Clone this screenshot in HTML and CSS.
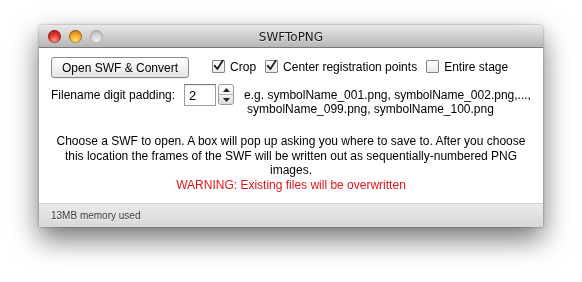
FILE: index.html
```html
<!DOCTYPE html>
<html>
<head>
<meta charset="utf-8">
<title>SWFToPNG</title>
<link rel="stylesheet" href="styles.css">
</head>
<body>
<div class="stage">
  <div class="window">
    <div class="titlebar">
      <div class="lights">
        <span class="light red"></span>
        <span class="light yellow"></span>
        <span class="light gray"></span>
      </div>
      <div class="title">SWFToPNG</div>
      <div></div>
    </div>
    <div class="content">
      <div class="row1">
        <button class="btn">Open SWF &amp; Convert</button>
        <div class="checks">
          <label class="check"><span class="box"><svg width="14" height="14" viewBox="0 0 14 14"><path d="M2.6 6.6 L5.4 10 L10.8 1.6" fill="none" stroke="#1e1e1e" stroke-width="1.8" stroke-linecap="round" stroke-linejoin="round"/></svg></span>Crop</label>
          <label class="check"><span class="box"><svg width="14" height="14" viewBox="0 0 14 14"><path d="M2.6 6.6 L5.4 10 L10.8 1.6" fill="none" stroke="#1e1e1e" stroke-width="1.8" stroke-linecap="round" stroke-linejoin="round"/></svg></span>Center registration points</label>
          <label class="check"><span class="box"></span>Entire stage</label>
        </div>
      </div>
      <div class="row2">
        <span class="padlabel">Filename digit padding:</span>
        <div class="stepper">
          <div class="field">2</div>
          <div class="arrows">
            <span class="arrow"><svg width="7" height="4" viewBox="0 0 7 4"><path d="M3.5 0 L7 4 L0 4 Z" fill="#222"/></svg></span>
            <span class="arrow lower"><svg width="7" height="4" viewBox="0 0 7 4"><path d="M0 0 L7 0 L3.5 4 Z" fill="#222"/></svg></span>
          </div>
        </div>
        <div class="example">
          <div>e.g. symbolName_001.png, symbolName_002.png,...,</div>
          <div class="l2">symbolName_099.png, symbolName_100.png</div>
        </div>
      </div>
      <p class="info">Choose a SWF to open. A box will pop up asking you where to save to. After you choose this location the frames of the SWF will be written out as sequentially-numbered PNG images.</p>
      <p class="warn">WARNING: Existing files will be overwritten</p>
    </div>
    <div class="status">13MB memory used</div>
  </div>
</div>
</body>
</html>
```

FILE: styles.css
```css
* { box-sizing: border-box; }
html, body { margin: 0; padding: 0; background: #fff; }
body { font-family: "Liberation Sans", Arial, sans-serif; font-size: 12px; color: #000; min-height: 282px; }

.stage { padding: 25px 39px 55px 39px; min-height: 282px; }

.window {
  width: 504px;
  height: 202px;
  display: flex;
  flex-direction: column;
  background: #fff;
  border-radius: 4px 4px 0 0;
  filter: drop-shadow(0 0 1px rgba(0,0,0,0.4)) drop-shadow(0 12px 14px rgba(0,0,0,0.55));
}

.titlebar {
  height: 23px;
  display: grid;
  grid-template-columns: 1fr auto 1fr;
  align-items: center;
  border-radius: 4px 4px 0 0;
  background: linear-gradient(#e8e8e8, #cdcdcd 55%, #b6b6b6);
  border-bottom: 1px solid #7a7a7a;
}
.lights { display: flex; gap: 8px; padding-left: 9px; }
.light {
  width: 13px; height: 13px; border-radius: 50%;
  box-shadow: inset 0 0 0 1px rgba(0,0,0,0.28);
}
.light.red { background: radial-gradient(circle at 50% 78%, #ff9a8c 0, #e2332e 45%, #a8140f 100%); }
.light.yellow { background: radial-gradient(circle at 50% 78%, #ffe27a 0, #f3a52b 45%, #b56b0c 100%); }
.light.gray { background: radial-gradient(circle at 50% 78%, #f2f2f2 0, #cfcfcf 50%, #a9a9a9 100%); box-shadow: inset 0 0 0 1px rgba(0,0,0,0.15); }
.title {
  font-family: "DejaVu Sans", sans-serif;
  font-size: 12px;
  color: #1a1a1a;
  text-shadow: 0 1px 0 rgba(255,255,255,0.5);
  padding-top: 1px;
}

.content { flex: 1; padding: 9px 12px 0; background: #fff; }

.row1 { display: flex; align-items: center; height: 21px; }
.btn {
  height: 21px;
  padding: 0 10px;
  font: 12px "Liberation Sans", Arial, sans-serif;
  color: #000;
  border: 1px solid #8a8a8a;
  border-radius: 3px;
  background: linear-gradient(#ffffff, #f3f3f3 50%, #e4e4e4);
  box-shadow: 0 1px 0 rgba(0,0,0,0.08);
}
.checks { display: flex; gap: 9px; margin-left: 23px; margin-top: -2px; }
.check { display: flex; align-items: center; }
.box {
  position: relative;
  width: 13px; height: 13px;
  margin-right: 5px;
  border: 1px solid #868686;
  border-radius: 1px;
  background: linear-gradient(#fdfdfd, #e9e9e9);
}
.box svg { position: absolute; left: -1px; top: -2px; }

.row2 { display: flex; align-items: flex-start; margin-top: 6px; }
.padlabel { line-height: 14px; margin-top: 4px; }
.stepper { display: flex; margin-left: 9px; gap: 2px; }
.field {
  width: 32px; height: 22px;
  border: 1px solid #9c9c9c;
  border-top-color: #7c7c7c;
  padding: 3px 0 0 4px;
  font-size: 13px;
  line-height: 15px;
  box-shadow: inset 0 1px 1px rgba(0,0,0,0.1);
}
.arrows {
  width: 16px; height: 21px;
  display: flex; flex-direction: column;
  border: 1px solid #9a9a9a;
  border-radius: 3px;
  background: linear-gradient(#fefefe, #e6e6e6);
}
.arrow { flex: 1; display: flex; align-items: center; justify-content: center; }
.arrow.lower { border-top: 1px solid #b4b4b4; background: linear-gradient(#f0f0f0, #dcdcdc); border-radius: 0 0 3px 3px; }

.example { margin-left: 10px; margin-top: 4px; line-height: 14px; }
.example .l2 { padding-left: 3px; }

.info, .warn { margin: 0; text-align: center; line-height: 14.5px; }
.info { margin-top: 18px; }
.warn { color: #e2141b; }

.status {
  height: 24px;
  padding-left: 12px;
  display: flex; align-items: center;
  font-size: 10px;
  color: #3c3c3c;
  text-shadow: 0 1px 0 rgba(255,255,255,0.6);
  background: linear-gradient(#e9e9e9, #d8d8d8);
  border-top: 1px solid #d0d0d0;
}
```
